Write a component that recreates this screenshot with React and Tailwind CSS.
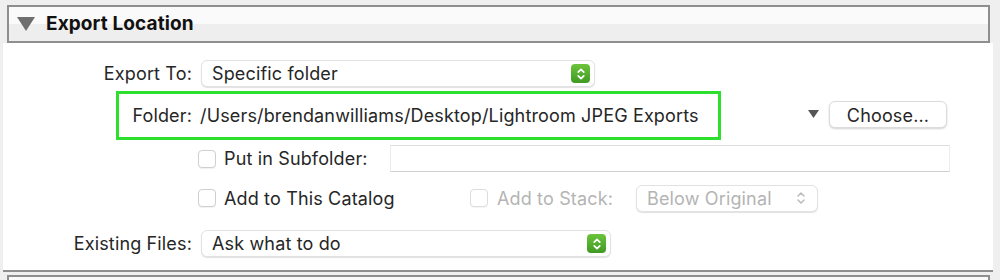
import React from 'react'

function Stepper({ disabled }) {
  if (disabled) {
    return (
      <svg width="12" height="16" viewBox="0 0 12 16" className="mr-[10px]">
        <path d="M3 6 L6 3 L9 6" fill="none" stroke="#bdbdbd" strokeWidth="1.6" strokeLinecap="round" strokeLinejoin="round" />
        <path d="M3 10 L6 13 L9 10" fill="none" stroke="#bdbdbd" strokeWidth="1.6" strokeLinecap="round" strokeLinejoin="round" />
      </svg>
    )
  }
  return (
    <div className="w-[19px] h-[19px] mr-[4px] rounded-[4px] bg-gradient-to-b from-[#6cc43c] to-[#3f9a22] flex items-center justify-center">
      <svg width="10" height="14" viewBox="0 0 10 14">
        <path d="M2.2 5.2 L5 2.4 L7.8 5.2" fill="none" stroke="white" strokeWidth="1.7" strokeLinecap="round" strokeLinejoin="round" />
        <path d="M2.2 8.8 L5 11.6 L7.8 8.8" fill="none" stroke="white" strokeWidth="1.7" strokeLinecap="round" strokeLinejoin="round" />
      </svg>
    </div>
  )
}

function Select({ value, width, disabled }) {
  return (
    <div
      className={`h-[27px] ${width} rounded-[6px] bg-white border border-[#e2e2e2] shadow-[0_1px_1px_rgba(0,0,0,0.12)] flex items-center justify-between pl-[10px]`}
    >
      <span className={disabled ? 'text-[#b4b4b4]' : 'text-[#262626]'}>{value}</span>
      <Stepper disabled={disabled} />
    </div>
  )
}

function Checkbox() {
  return <div className="w-[18px] h-[18px] rounded-[4px] border border-[#cfcfcf] bg-white shadow-[0_1px_1px_rgba(0,0,0,0.06)]" />
}

export default function App() {
  return (
    <div className="w-[1000px] h-[280px] overflow-hidden bg-[#efefef] text-[18px] tracking-[0.15px] text-[#262626]" style={{ fontFamily: 'Inter, "Noto Sans", sans-serif' }}>
      <div className="pl-[7px] pt-[5px]">
        <div className="w-[983px] h-[38px] border-2 border-[#8e8e8e] bg-gradient-to-b from-[#fafafa] from-50% to-[#eeeeee] to-50% flex items-center">
          <svg width="18" height="14" viewBox="0 0 18 14" className="ml-[8px]">
            <path d="M0 0 L18 0 L9 14 Z" fill="#6e6e6e" />
          </svg>
          <span className="ml-[11px] font-bold text-[19px] tracking-[0.1px] text-[#111]">Export Location</span>
        </div>
      </div>

      <div className="ml-[3px] w-[990px] h-[229px] bg-white border-b-2 border-[#8e8e8e] pt-[17px]">
        <div className="flex items-center">
          <div className="w-[189px] text-right">Export To:</div>
          <div className="ml-[9px]">
            <Select value="Specific folder" width="w-[394px]" />
          </div>
        </div>

        <div className="flex items-center mt-[4px]">
          <div className="ml-[113px] w-[605px] h-[49px] border-[3px] border-[#2ee02e] flex items-center">
            <div className="w-[73px] text-right">Folder:</div>
            <div className="ml-[8px] whitespace-nowrap">/Users/brendanwilliams/Desktop/Lightroom JPEG Exports</div>
          </div>
          <svg width="11" height="8" viewBox="0 0 11 8" className="ml-[87px] -mt-[4px]">
            <path d="M0 0 L11 0 L5.5 8 Z" fill="#555" />
          </svg>
          <button className="ml-[10px] w-[118px] h-[27px] rounded-[6px] bg-white border border-[#dcdcdc] shadow-[0_1px_2px_rgba(0,0,0,0.18)] -mt-[2px]">
            Choose...
          </button>
        </div>

        <div className="flex items-center mt-[5px] h-[27px]">
          <div className="ml-[195px]">
            <Checkbox />
          </div>
          <span className="ml-[8px] w-[166px] whitespace-nowrap">Put in Subfolder:</span>
          <div className="w-[560px] h-[27px] border-t border-[#dedede] border-b border-b-[#cfcfcf] border-x border-x-[#ececec] bg-white" />
        </div>

        <div className="flex items-center mt-[12px] h-[28px]">
          <div className="ml-[195px]">
            <Checkbox />
          </div>
          <span className="ml-[8px] w-[246px] whitespace-nowrap">Add to This Catalog</span>
          <div className="opacity-70">
            <Checkbox />
          </div>
          <span className="ml-[9px] w-[139px] whitespace-nowrap text-[#b4b4b4]">Add to Stack:</span>
          <div>
            <Select value="Below Original" width="w-[182px]" disabled />
          </div>
        </div>

        <div className="flex items-center mt-[18px]">
          <div className="w-[189px] text-right">Existing Files:</div>
          <div className="ml-[9px]">
            <Select value="Ask what to do" width="w-[410px]" />
          </div>
        </div>
      </div>

      <div className="pl-[7px] pt-[3px]">
        <div className="w-[983px] h-[20px] border-t-2 border-x-2 border-[#8e8e8e] bg-[#fafafa]" />
      </div>
    </div>
  )
}
